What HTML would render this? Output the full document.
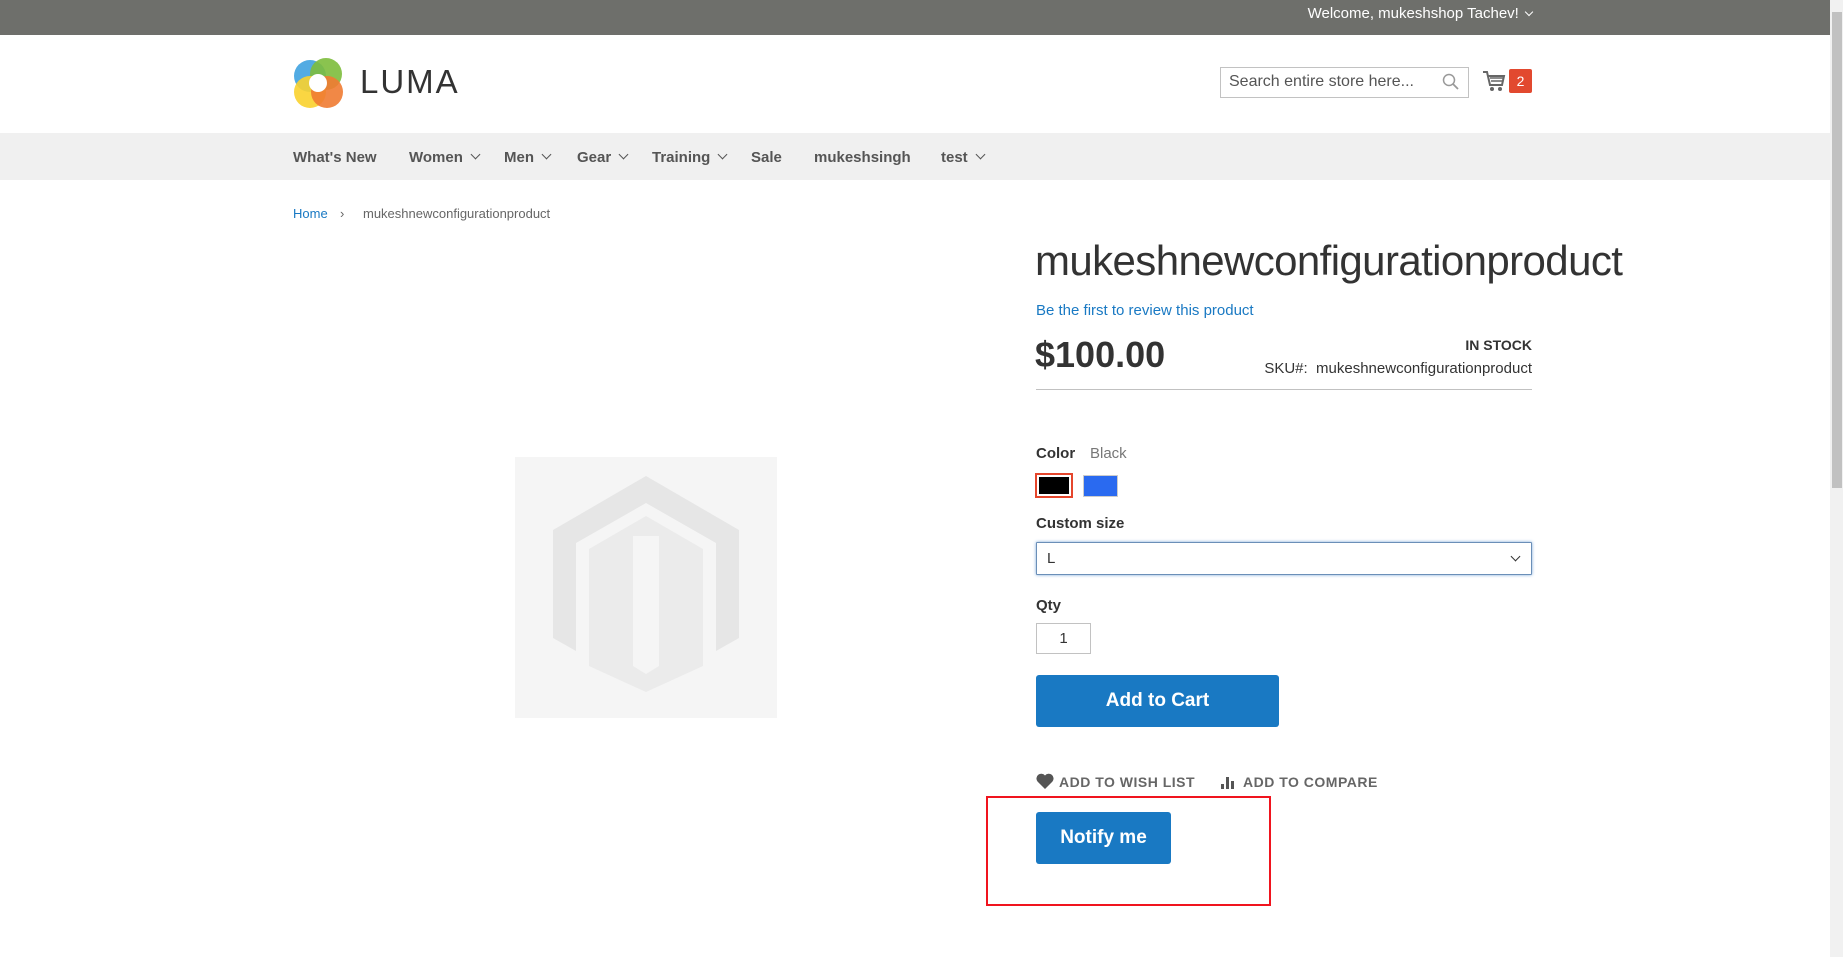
<!DOCTYPE html>
<html><head><meta charset="utf-8"><style>
*{margin:0;padding:0;box-sizing:border-box}
body{width:1843px;height:957px;overflow:hidden;background:#fff;font-family:"Liberation Sans",sans-serif;color:#333;position:relative}
.a{position:absolute;white-space:nowrap}
.top{left:0;top:0;width:1830px;height:35px;background:#6e6f6b}
.nav{left:0;top:133px;width:1830px;height:47px;background:#f0f0f0}
.ni{top:149px;font-size:15px;font-weight:bold;color:#555}
.chev{display:inline-block;width:7px;height:7px;border-right:1.5px solid #555;border-bottom:1.5px solid #555;transform:rotate(45deg);margin-left:9px;position:relative;top:-4px}
.btn{background:#1979c3;color:#fff;border-radius:3px;text-align:center;font-weight:bold}
</style></head><body>
<div class="a top"></div>
<div class="a" style="right:311px;top:5px;font-size:15px;color:#fff">Welcome, mukeshshop Tachev! <span class="chev" style="border-color:#fff;width:6px;height:6px;margin-left:3px;top:-3px"></span></div>
<div class="a" style="left:1830px;top:0;width:13px;height:957px;background:#f1f1f1"></div>
<div class="a" style="left:1832px;top:12px;width:10px;height:476px;background:#c1c1c1"></div>

<svg class="a" style="left:292px;top:56px" width="54" height="54" viewBox="0 0 54 54">
<circle cx="18" cy="20" r="16" fill="#3fa2e0" opacity=".9"/><circle cx="34" cy="18" r="16" fill="#7dbd3c" opacity=".9"/>
<circle cx="18" cy="36" r="16" fill="#f9d22d" opacity=".9"/><circle cx="35" cy="36" r="16" fill="#ef7b32" opacity=".9"/>
<circle cx="26" cy="27" r="9" fill="#fff"/></svg>
<div class="a" style="left:360px;top:63px;font-size:33px;letter-spacing:2px;color:#333">LUMA</div>

<div class="a" style="left:1220px;top:67px;width:249px;height:31px;border:1px solid #c2c2c2"></div>
<div class="a" style="left:1229px;top:73px;font-size:16px;color:#555">Search entire store here...</div>
<svg class="a" style="left:1442px;top:73px" width="18" height="18"><circle cx="7" cy="7" r="5.5" fill="none" stroke="#999" stroke-width="1.5"/><line x1="11" y1="11" x2="16" y2="16" stroke="#999" stroke-width="1.8"/></svg>
<svg class="a" style="left:1482px;top:70px" width="24" height="22"><path d="M1 2h4l3 13h12l2-9H6" fill="none" stroke="#666" stroke-width="2"/><path d="M8 8h13M9 11h11" stroke="#666" stroke-width="1.5"/><circle cx="10" cy="19" r="2" fill="#666"/><circle cx="18" cy="19" r="2" fill="#666"/></svg>
<div class="a" style="left:1509px;top:69px;width:23px;height:24px;background:#e2492f;color:#fff;font-size:14px;text-align:center;line-height:24px;border-radius:2px">2</div>

<div class="a nav"></div>
<div class="a ni" style="left:293px">What's New</div>
<div class="a ni" style="left:409px">Women<span class="chev"></span></div>
<div class="a ni" style="left:504px">Men<span class="chev"></span></div>
<div class="a ni" style="left:577px">Gear<span class="chev"></span></div>
<div class="a ni" style="left:652px">Training<span class="chev"></span></div>
<div class="a ni" style="left:751px">Sale</div>
<div class="a ni" style="left:814px">mukeshsingh</div>
<div class="a ni" style="left:941px">test<span class="chev"></span></div>

<div class="a" style="left:293px;top:206px;font-size:13px;color:#1979c3">Home</div>
<div class="a" style="left:340px;top:206px;font-size:13px;color:#666">›</div>
<div class="a" style="left:363px;top:206px;font-size:13px;color:#666">mukeshnewconfigurationproduct</div>

<div class="a" style="left:515px;top:457px;width:262px;height:261px;background:#f5f5f5"></div>
<svg class="a" style="left:553px;top:476px" width="186" height="216" viewBox="0 0 186 216"><path d="M93 0L186 54V162L163 175V67L93 27L23 67V175L0 162V54Z" fill="#e6e6e6"/><path d="M93 40L150 73V190L93 216L36 190V73Z" fill="#ebebeb"/><path d="M80 60h26v130l-13 8-13-8z" fill="#f5f5f5"/></svg>

<div class="a" style="left:1035px;top:237px;font-size:42px;color:#333;letter-spacing:-0.6px">mukeshnewconfigurationproduct</div>
<div class="a" style="left:1036px;top:302px;font-size:15px;color:#1979c3">Be the first to review this product</div>
<div class="a" style="left:1035px;top:334px;font-size:36px;font-weight:bold;color:#333">$100.00</div>
<div class="a" style="right:311px;top:337px;font-size:14px;font-weight:bold;color:#333">IN STOCK</div>
<div class="a" style="right:311px;top:360px;font-size:15px;color:#333">SKU#:&nbsp; mukeshnewconfigurationproduct</div>
<div class="a" style="left:1036px;top:389px;width:496px;height:1px;background:#c1c1c1"></div>

<div class="a" style="left:1036px;top:445px;font-size:15px;font-weight:bold">Color</div>
<div class="a" style="left:1090px;top:445px;font-size:15px;color:#777">Black</div>
<div class="a" style="left:1035px;top:473px;width:38px;height:25px;border:2px solid #e5462c;padding:2px"><div style="width:100%;height:100%;background:#000"></div></div>
<div class="a" style="left:1083px;top:475px;width:35px;height:22px;background:#2a6af0;border:1px solid #ccc"></div>
<div class="a" style="left:1036px;top:515px;font-size:15px;font-weight:bold">Custom size</div>
<div class="a" style="left:1036px;top:542px;width:496px;height:33px;border:1px solid #6b8fb8;box-shadow:0 0 3px #7aa7d8;border-radius:1px"></div>
<div class="a" style="left:1047px;top:550px;font-size:15px">L</div>
<div class="a" style="left:1512px;top:553px;width:7px;height:7px;border-right:1.5px solid #333;border-bottom:1.5px solid #333;transform:rotate(45deg)"></div>
<div class="a" style="left:1036px;top:597px;font-size:15px;font-weight:bold">Qty</div>
<div class="a" style="left:1036px;top:623px;width:55px;height:31px;border:1px solid #c2c2c2;font-size:15px;text-align:center;line-height:29px">1</div>
<div class="a btn" style="left:1036px;top:675px;width:243px;height:52px;font-size:19px;line-height:52px">Add to Cart</div>

<svg class="a" style="left:1036px;top:773px" width="18" height="16" viewBox="0 0 18 16"><path d="M9 16L1.5 8.5A4.5 4.5 0 0 1 9 2.5A4.5 4.5 0 0 1 16.5 8.5Z" fill="#555"/></svg>
<div class="a" style="left:1059px;top:774px;font-size:14px;font-weight:bold;color:#666;letter-spacing:.5px">ADD TO WISH LIST</div>
<svg class="a" style="left:1221px;top:775px" width="16" height="14"><rect x="0" y="9" width="3" height="5" fill="#555"/><rect x="5" y="2" width="3" height="12" fill="#555"/><rect x="10" y="6" width="3" height="8" fill="#555"/></svg>
<div class="a" style="left:1243px;top:774px;font-size:14px;font-weight:bold;color:#666;letter-spacing:.5px">ADD TO COMPARE</div>

<div class="a" style="left:986px;top:796px;width:285px;height:110px;border:2px solid #f0141e"></div>
<div class="a btn" style="left:1036px;top:812px;width:135px;height:52px;font-size:19px;line-height:52px">Notify me</div>
</body></html>
